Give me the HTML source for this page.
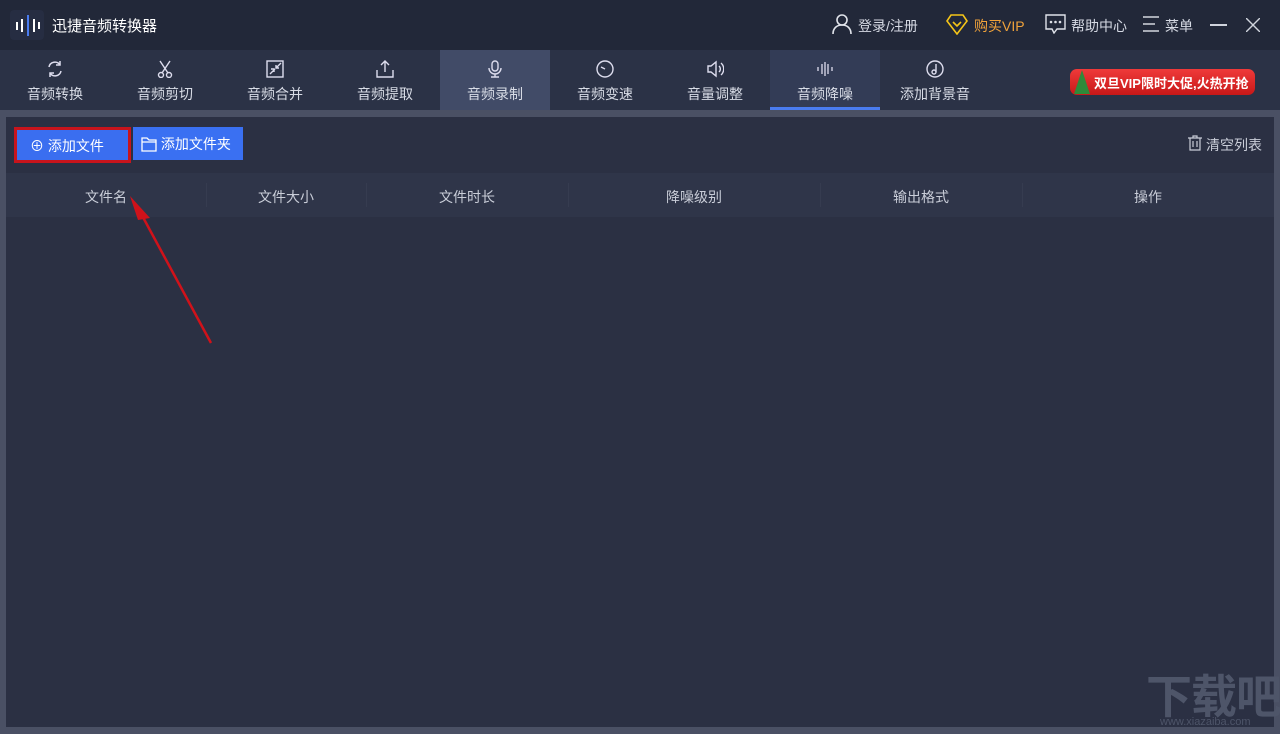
<!DOCTYPE html>
<html><head><meta charset="utf-8"><style>
*{margin:0;padding:0;box-sizing:border-box}
html,body{width:1280px;height:734px;overflow:hidden}
body{background:#4a5064;font-family:"Liberation Sans","Noto Sans CJK SC",sans-serif;position:relative;color:#d5d9e3}
.title{position:absolute;left:0;top:0;width:1280px;height:50px;background:#222839}
.tabs{position:absolute;left:0;top:50px;width:1280px;height:60px;background:#2b3246}
.tab{position:absolute;top:0;width:110px;height:60px;text-align:center;font-size:14px;color:#d8dce6}
.tab svg{position:absolute;left:46px;top:10px}
.tab span{position:absolute;left:0;right:0;top:34px}
.content{position:absolute;left:6px;top:117px;width:1268px;height:610px;background:#2b3043}
.abs{position:absolute;white-space:nowrap}
.hdr{position:absolute;left:0;top:56px;width:1268px;height:44px;background:#2f3549;font-size:14px;color:#c9cdd8}
.hdr div{position:absolute;top:14px;text-align:center}
.sep{position:absolute;top:10px;width:1px;height:24px;background:#363c50}
</style></head><body>
<div class="title">
 <div class="abs" style="left:10px;top:10px;width:34px;height:30px;background:#262d42;border-radius:4px"></div>
 <svg class="abs" style="left:14px;top:14px" width="28" height="22"><g stroke-width="2" stroke="#fff"><line x1="3" y1="8" x2="3" y2="16"/><line x1="8" y1="5" x2="8" y2="18"/><line x1="20" y1="5" x2="20" y2="18"/><line x1="25" y1="8" x2="25" y2="15"/></g><line x1="14" y1="1" x2="14" y2="22" stroke="#4a7cf0" stroke-width="2"/></svg>
 <div class="abs" style="left:52px;top:15px;font-size:15px;color:#fff">迅捷音频转换器</div>
 <svg class="abs" style="left:832px;top:14px" width="20" height="20" fill="none" stroke="#e0e3ea" stroke-width="1.6"><circle cx="10" cy="6" r="5"/><path d="M1 20c0-6 4-9 9-9s9 3 9 9"/></svg>
 <div class="abs" style="left:858px;top:16px;font-size:14px">登录/注册</div>
 <svg class="abs" style="left:946px;top:13px" width="22" height="22" fill="none" stroke="#f5c518" stroke-width="1.6"><path d="M5 2h12l4 6-10 13L1 8z"/><path d="M7 9l4 4 4-4"/></svg>
 <div class="abs" style="left:974px;top:16px;font-size:14px;color:#f0a23a">购买VIP</div>
 <svg class="abs" style="left:1045px;top:14px" width="22" height="20" fill="none" stroke="#e0e3ea" stroke-width="1.4"><path d="M1 1h19v14H12l-3 4-2-4H1z"/><circle cx="6" cy="8" r=".6"/><circle cx="10.5" cy="8" r=".6"/><circle cx="15" cy="8" r=".6"/></svg>
 <div class="abs" style="left:1071px;top:16px;font-size:14px">帮助中心</div>
 <svg class="abs" style="left:1143px;top:16px" width="16" height="16" stroke="#e0e3ea" stroke-width="1.4"><line x1="0" y1="1" x2="16" y2="1"/><line x1="0" y1="8" x2="12" y2="8"/><line x1="0" y1="15" x2="16" y2="15"/></svg>
 <div class="abs" style="left:1165px;top:16px;font-size:14px">菜单</div>
 <div class="abs" style="left:1210px;top:24px;width:17px;height:1.5px;background:#d0d4dd"></div>
 <svg class="abs" style="left:1246px;top:18px" width="14" height="14" stroke="#d0d4dd" stroke-width="1.4"><line x1="0" y1="0" x2="14" y2="14"/><line x1="14" y1="0" x2="0" y2="14"/></svg>
</div>
<div class="tabs">
 <div class="tab" style="left:0"><svg width="18" height="18" fill="none" stroke="#dde" stroke-width="1.5"><path d="M3 7a6 6 0 0 1 11-2M15 11a6 6 0 0 1-11 2"/><path d="M14 1v4h-4M4 17v-4h4"/></svg><span>音频转换</span></div>
 <div class="tab" style="left:110px"><svg width="18" height="18" fill="none" stroke="#dde" stroke-width="1.4"><path d="M4 1l8 12M14 1L6 13"/><circle cx="5" cy="15" r="2.5"/><circle cx="13" cy="15" r="2.5"/></svg><span>音频剪切</span></div>
 <div class="tab" style="left:220px"><svg width="18" height="18" fill="none" stroke="#dde" stroke-width="1.4"><rect x="1" y="1" width="16" height="16"/><path d="M10 8l5-5M4 14l5-5M13 8h-3V5M5 9h3v3"/></svg><span>音频合并</span></div>
 <div class="tab" style="left:330px"><svg width="18" height="18" fill="none" stroke="#dde" stroke-width="1.4"><path d="M9 12V1M5 5l4-4 4 4M1 10v7h16v-7"/></svg><span>音频提取</span></div>
 <div class="tab" style="left:440px;background:#414b67"><svg width="18" height="18" fill="none" stroke="#dde" stroke-width="1.4"><rect x="6" y="1" width="6" height="10" rx="3"/><path d="M3 8a6 6 0 0 0 12 0M9 14v3M5 17h8"/></svg><span>音频录制</span></div>
 <div class="tab" style="left:550px"><svg width="18" height="18" fill="none" stroke="#dde" stroke-width="1.4"><circle cx="9" cy="9" r="8"/><path d="M5 7l4 2"/></svg><span>音频变速</span></div>
 <div class="tab" style="left:660px"><svg width="18" height="18" fill="none" stroke="#dde" stroke-width="1.4"><path d="M2 6h3l5-4v14l-5-4H2zM13 6a4 4 0 0 1 0 6M15 3a8 8 0 0 1 0 12"/></svg><span>音量调整</span></div>
 <div class="tab" style="left:770px;background:#333c56;border-bottom:3px solid #4a7cf0"><svg width="18" height="18" stroke="#dde" stroke-width="1.3"><path d="M2 7v4M6 4v10M9 2v14M12 4v10M16 7v4"/></svg><span>音频降噪</span></div>
 <div class="tab" style="left:880px"><svg width="18" height="18" fill="none" stroke="#dde" stroke-width="1.4"><circle cx="9" cy="9" r="8"/><path d="M10 4v8"/><circle cx="8" cy="12" r="2"/></svg><span>添加背景音</span></div>
 <div class="abs" style="left:1070px;top:19px;width:185px;height:26px;background:linear-gradient(#ef3a3a,#c81818);border-radius:7px;color:#fff;font-size:13px;font-weight:bold;padding:4px 0 0 24px">双旦VIP限时大促,火热开抢</div>
 <div class="abs" style="left:1074px;top:20px;width:0;height:0;border-left:8px solid transparent;border-right:8px solid transparent;border-bottom:24px solid #2f8a3a"></div>
</div>
<div class="content">
 <div class="abs" style="left:8px;top:10px;width:117px;height:36px;border:3px solid #c8141c;background:#3a6ef0;color:#fff;font-size:14px;padding:6px 0 0 13px">⊕ 添加文件</div>
 <div class="abs" style="left:127px;top:10px;width:110px;height:33px;background:#3a70f2;color:#fff;font-size:14px;padding:7px 0 0 8px"><svg style="vertical-align:-3px" width="16" height="15" fill="none" stroke="#fff" stroke-width="1.3"><path d="M1 1h5l2 2h7v11H1z M1 5h14"/></svg> 添加文件夹</div>
 <svg class="abs" style="left:1182px;top:18px" width="14" height="16" fill="none" stroke="#c9cdd8" stroke-width="1.2"><path d="M0 3h14M5 3V1h4v2M2 3v12h10V3M5 6v6M9 6v6"/></svg>
 <div class="abs" style="left:1200px;top:18px;font-size:14px;color:#c9cdd8">清空列表</div>
 <div class="hdr">
  <div style="left:0;width:200px">文件名</div><span class="sep" style="left:200px"></span>
  <div style="left:200px;width:160px">文件大小</div><span class="sep" style="left:360px"></span>
  <div style="left:360px;width:202px">文件时长</div><span class="sep" style="left:562px"></span>
  <div style="left:562px;width:252px">降噪级别</div><span class="sep" style="left:814px"></span>
  <div style="left:814px;width:202px">输出格式</div><span class="sep" style="left:1016px"></span>
  <div style="left:1016px;width:252px">操作</div>
 </div>
 <svg class="abs" style="left:110px;top:75px" width="110" height="160"><line x1="95" y1="151" x2="22" y2="16" stroke="#d0121a" stroke-width="2.5"/><path d="M14 4l20 22-12 2z" fill="#d0121a"/></svg>
</div>
<div class="abs" style="left:1146px;top:672px;font-size:46px;line-height:50px;font-weight:bold;color:#4e5569;letter-spacing:-1px">下载吧</div>
<div class="abs" style="left:1160px;top:716px;font-size:11px;color:#4e5569">www.xiazaiba.com</div>
</body></html>
